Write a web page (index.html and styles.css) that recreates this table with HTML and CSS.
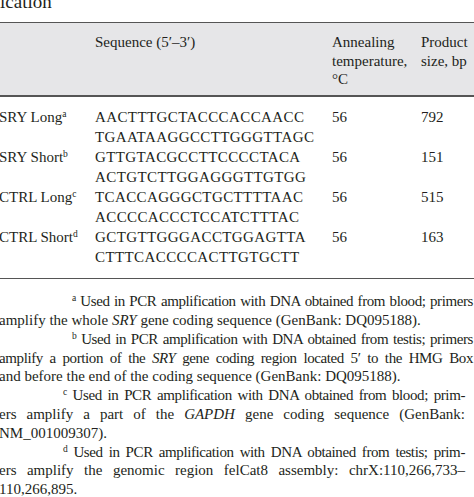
FILE: index.html
```html
<!DOCTYPE html>
<html>
<head>
<meta charset="utf-8">
<link rel="stylesheet" href="styles.css">
</head>
<body>
<div class="page">
  <div class="title">ication</div>
  <table class="primers">
    <thead>
      <tr>
        <th class="c-name"></th>
        <th class="c-seq">Sequence (5′–3′)</th>
        <th class="c-temp">Annealing<br>temperature,<br>°C</th>
        <th class="c-size">Product<br>size, bp</th>
      </tr>
    </thead>
    <tbody>
      <tr class="first">
        <td class="c-name">SRY Long<sup>a</sup></td>
        <td class="c-seq">AACTTTGCTACCCACCAACC<br>TGAATAAGGCCTTGGGTTAGC</td>
        <td class="c-temp">56</td>
        <td class="c-size">792</td>
      </tr>
      <tr>
        <td class="c-name">SRY Short<sup>b</sup></td>
        <td class="c-seq">GTTGTACGCCTTCCCCTACA<br>ACTGTCTTGGAGGGTTGTGG</td>
        <td class="c-temp">56</td>
        <td class="c-size">151</td>
      </tr>
      <tr>
        <td class="c-name">CTRL Long<sup>c</sup></td>
        <td class="c-seq">TCACCAGGGCTGCTTTTAAC<br>ACCCCACCCTCCATCTTTAC</td>
        <td class="c-temp">56</td>
        <td class="c-size">515</td>
      </tr>
      <tr class="last">
        <td class="c-name">CTRL Short<sup>d</sup></td>
        <td class="c-seq">GCTGTTGGGACCTGGAGTTA<br>CTTTCACCCCACTTGTGCTT</td>
        <td class="c-temp">56</td>
        <td class="c-size">163</td>
      </tr>
    </tbody>
  </table>
  <div class="notes">
    <div class="note wide">
      <span class="ln jl tight ind-a"><sup>a</sup> Used in PCR amplification with DNA obtained from blood; primers</span>
      <span class="ln">amplify the whole <i>SRY</i> gene coding sequence (GenBank: DQ095188).</span>
    </div>
    <div class="note wide">
      <span class="ln jl tight ind-a"><sup>b</sup> Used in PCR amplification with DNA obtained from testis; primers</span>
      <span class="ln jl tight">amplify a portion of the <i>SRY</i> gene coding region located 5′ to the HMG Box</span>
      <span class="ln">and before the end of the coding sequence (GenBank: DQ095188).</span>
    </div>
    <div class="note narrow">
      <span class="ln jl tight ind-c"><sup>c</sup> Used in PCR amplification with DNA obtained from blood; prim-</span>
      <span class="ln jl">ers amplify a part of the <i>GAPDH</i> gene coding sequence (GenBank:</span>
      <span class="ln">NM_001009307).</span>
    </div>
    <div class="note narrow">
      <span class="ln jl tight ind-c"><sup>d</sup> Used in PCR amplification with DNA obtained from testis; prim-</span>
      <span class="ln jl">ers amplify the genomic region felCat8 assembly: chrX:110,266,733–</span>
      <span class="ln">110,266,895.</span>
    </div>
  </div>
</div>
</body>
</html>
```

FILE: styles.css
```css
html, body {
  margin: 0;
  padding: 0;
  background: #ffffff;
  overflow: hidden;
}
body {
  width: 474px;
  height: 497px;
  font-family: "Liberation Serif", "Times New Roman", serif;
  color: #231f20;
}
.page {
  margin-left: -1px;
  width: 490px;
}
.title {
  font-size: 19px;
  line-height: 19px;
  margin-top: -8px;
  height: 30px;
  margin-left: 1px;
}
.primers {
  border-collapse: collapse;
  width: 490px;
  font-size: 15px;
  table-layout: fixed;
}
.primers thead tr {
  background: #e6e6e8;
  border-top: 1px solid #555;
  border-bottom: 2px solid #555;
}
.primers th {
  font-weight: normal;
  text-align: left;
  vertical-align: top;
  line-height: 18.5px;
  padding: 10px 0 6px 0;
}
.primers td {
  vertical-align: top;
  line-height: 20.1px;
  padding: 0;
  white-space: nowrap;
}
.primers tr.first td { padding-top: 10px; }
.primers tr.last td { padding-bottom: 11px; }
.primers tbody tr.last { border-bottom: 1px solid #555; }
.c-name { width: 96px; }
.c-seq { width: 237px; }
.c-temp { width: 89px; }
.c-size { width: 68px; }
.c-seq { letter-spacing: 0.4px; }
.primers th.c-seq { letter-spacing: 0; }
sup {
  font-size: 9.5px;
  line-height: 0;
  vertical-align: 5px;
}
.notes {
  font-size: 15px;
  line-height: 18.8px;
  padding-top: 13px;
}
.note.wide { width: 474px; }
.note.narrow { width: 466px; }
.ln { display: block; white-space: nowrap; }
.ln.jl { text-align: justify; text-align-last: justify; }
.ln.tight { letter-spacing: -0.4px; word-spacing: -1px; }
.ind-a { padding-left: 73px; }
.ind-c { padding-left: 64px; }
```
